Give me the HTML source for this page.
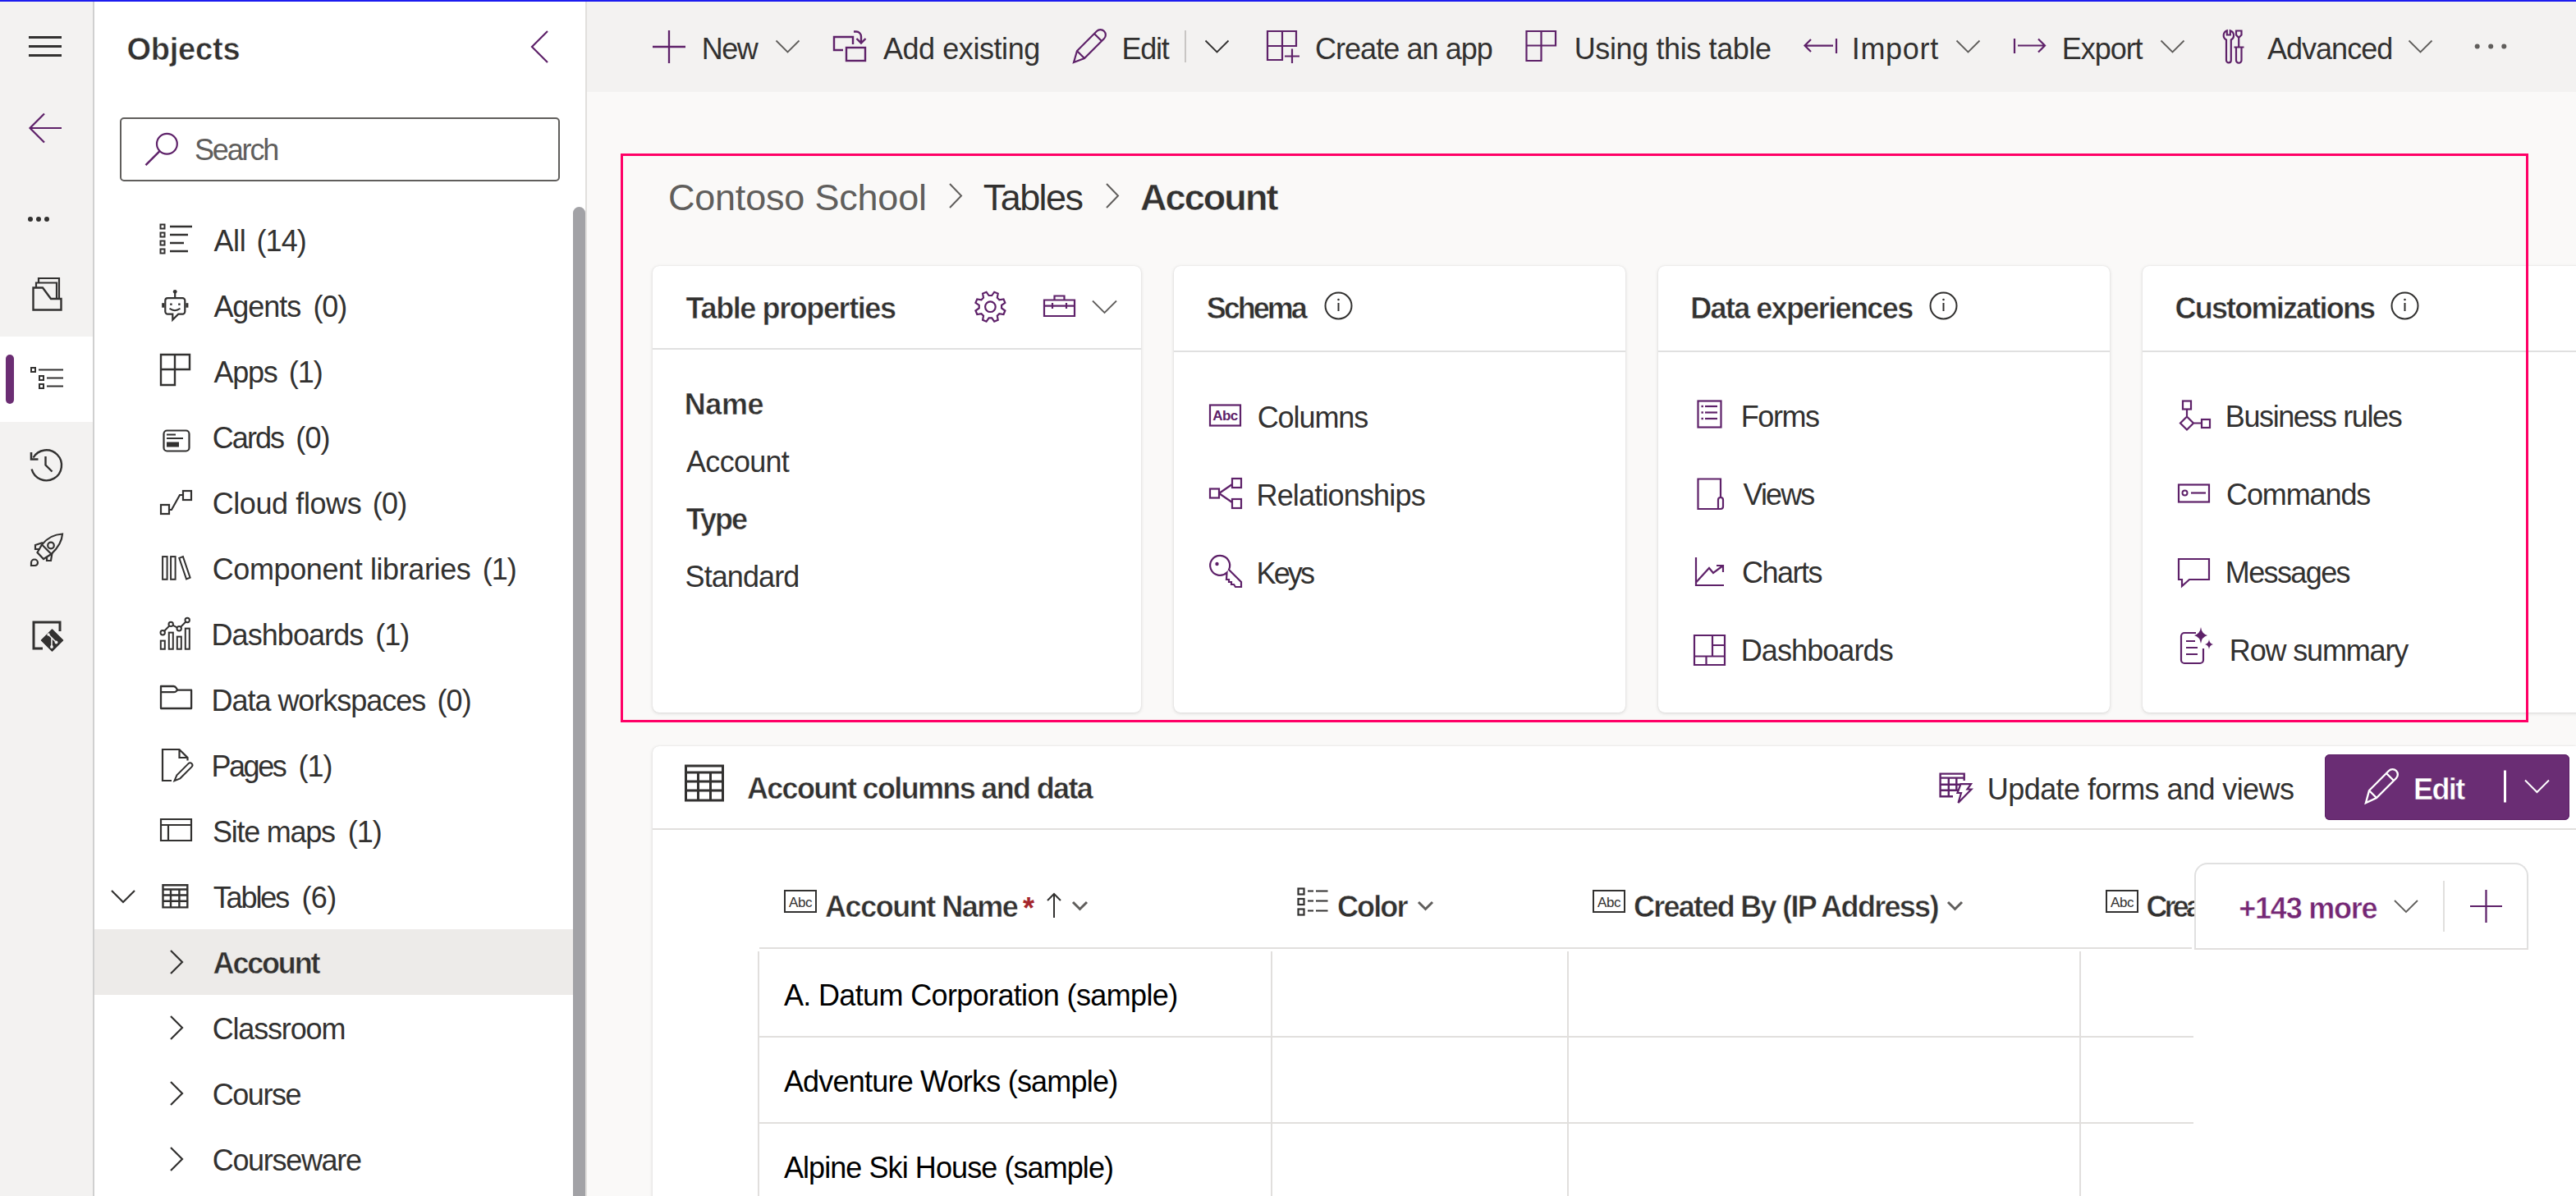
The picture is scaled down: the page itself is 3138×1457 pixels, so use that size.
<!DOCTYPE html><html><head><meta charset="utf-8"><style>html,body{margin:0;padding:0;width:3138px;height:1457px;overflow:hidden;position:relative;font-family:"Liberation Sans",sans-serif;}</style></head><body>
<div style="position:absolute;left:0px;top:0px;width:3138px;height:1457px;background:#faf9f8"></div>
<div style="position:absolute;left:0px;top:0px;width:113px;height:1457px;background:#f3f2f1"></div>
<div style="position:absolute;left:0px;top:410px;width:113px;height:104px;background:#ffffff"></div>
<div style="position:absolute;left:113px;top:0px;width:2px;height:1457px;background:#d0d0d0"></div>
<div style="position:absolute;left:115px;top:0px;width:598px;height:1457px;background:#ffffff"></div>
<div style="position:absolute;left:713px;top:0px;width:2px;height:1457px;background:#e1dfdd"></div>
<div style="position:absolute;left:715px;top:0px;width:2423px;height:112px;background:#f3f2f1"></div>
<div style="position:absolute;left:0px;top:0px;width:3138px;height:2px;background:#1c1cf0"></div>
<div style="position:absolute;left:7px;top:432px;width:10px;height:60px;background:#6b2d73;border-radius:5px"></div>
<div style="position:absolute;left:146px;top:143px;width:536px;height:78px;box-sizing:border-box;border:2px solid #605e5c;border-radius:5px;background:#fff"></div>
<div style="position:absolute;left:698px;top:252px;width:15px;height:1205px;background:#a2a2a6;border-radius:7.5px 7.5px 0 0"></div>
<div style="position:absolute;left:115px;top:1132px;width:583px;height:80px;background:#edebe9"></div>
<div style="position:absolute;left:795px;top:324px;width:595px;height:544px;background:#fff;border-radius:8px;box-shadow:0 1px 4px rgba(0,0,0,0.14),0 0 1px rgba(0,0,0,0.12)"></div>
<div style="position:absolute;left:795px;top:424px;width:595px;height:2px;background:#e0e0e0"></div>
<div style="position:absolute;left:1430px;top:324px;width:550px;height:544px;background:#fff;border-radius:8px;box-shadow:0 1px 4px rgba(0,0,0,0.14),0 0 1px rgba(0,0,0,0.12)"></div>
<div style="position:absolute;left:1430px;top:427px;width:550px;height:2px;background:#e0e0e0"></div>
<div style="position:absolute;left:2020px;top:324px;width:550px;height:544px;background:#fff;border-radius:8px;box-shadow:0 1px 4px rgba(0,0,0,0.14),0 0 1px rgba(0,0,0,0.12)"></div>
<div style="position:absolute;left:2020px;top:427px;width:550px;height:2px;background:#e0e0e0"></div>
<div style="position:absolute;left:2610px;top:324px;width:600px;height:544px;background:#fff;border-radius:8px;box-shadow:0 1px 4px rgba(0,0,0,0.14),0 0 1px rgba(0,0,0,0.12)"></div>
<div style="position:absolute;left:2610px;top:427px;width:600px;height:2px;background:#e0e0e0"></div>
<div style="position:absolute;left:795px;top:909px;width:2343px;height:600px;background:#fff;border-radius:8px 0 0 0;box-shadow:0 1px 4px rgba(0,0,0,0.14),0 0 1px rgba(0,0,0,0.12)"></div>
<div style="position:absolute;left:795px;top:1009px;width:2343px;height:2px;background:#e1dfdd"></div>
<div style="position:absolute;left:2832px;top:919px;width:298px;height:80px;background:#6a2d74;border-radius:6px;box-shadow:inset 0 0 0 1px #5c1f66"></div>
<div style="position:absolute;left:925px;top:1154px;width:1745px;height:2px;background:#e1dfdd"></div>
<div style="position:absolute;left:923px;top:1159px;width:2px;height:300px;background:#e1dfdd"></div>
<div style="position:absolute;left:1548px;top:1159px;width:2px;height:300px;background:#e1dfdd"></div>
<div style="position:absolute;left:1909px;top:1159px;width:2px;height:300px;background:#e1dfdd"></div>
<div style="position:absolute;left:2533px;top:1159px;width:2px;height:300px;background:#e1dfdd"></div>
<div style="position:absolute;left:925px;top:1262px;width:1747px;height:2px;background:#e1dfdd"></div>
<div style="position:absolute;left:925px;top:1367px;width:1747px;height:2px;background:#e1dfdd"></div>
<svg width="3138" height="1457" style="position:absolute;left:0;top:0"><path d="M35 45.5H75" stroke="#323130" stroke-width="3" fill="none" /><path d="M35 56.5H75" stroke="#323130" stroke-width="3" fill="none" /><path d="M35 67.5H75" stroke="#323130" stroke-width="3" fill="none" /><path d="M75 156H36 M54 138.5L36.5 156L54 173.5" stroke="#5e2169" stroke-width="2.2" fill="none" /><circle cx="37" cy="267" r="3" stroke="#323130" stroke-width="0" fill="#323130"/><circle cx="47" cy="267" r="3" stroke="#323130" stroke-width="0" fill="#323130"/><circle cx="57" cy="267" r="3" stroke="#323130" stroke-width="0" fill="#323130"/><path d="M40.5 377.5V350.5H52L62 364H74.5V377.5Z" stroke="#323130" stroke-width="2.4" fill="none" /><path d="M44 350.5V344.5H69V364" stroke="#323130" stroke-width="2.2" fill="none" /><path d="M47 344.5V339H72V364" stroke="#323130" stroke-width="2.2" fill="none" /><rect x="38" y="448" width="5" height="5" rx="0" stroke="#323130" stroke-width="2" fill="none"/><rect x="48" y="458" width="5" height="5" rx="0" stroke="#323130" stroke-width="2" fill="none"/><rect x="48" y="468" width="5" height="5" rx="0" stroke="#323130" stroke-width="2" fill="none"/><path d="M47 450.5H77 M57 460.5H77 M57 470.5H77" stroke="#323130" stroke-width="2.2" fill="none" /><path d="M40.5 557.5 A18.5 18.5 0 1 1 38.6 571.5" stroke="#323130" stroke-width="2.4" fill="none" /><path d="M38 551V559.5H46.5" stroke="#323130" stroke-width="2.6" fill="none" /><path d="M55.5 556V566.5L63.5 574.5" stroke="#323130" stroke-width="2.4" fill="none" /><path d="M51 663.5C57 656 66 651 76 650.5C75.5 660 71 667 62.5 675Z" stroke="#323130" stroke-width="2.2" fill="none" /><path d="M51 663.5L45.5 673L53 681L62.5 675" stroke="#323130" stroke-width="2.2" fill="none" /><path d="M52 661L43 664V669H48.5" stroke="#323130" stroke-width="2.2" fill="none" /><path d="M63.5 673.5L62 683H57V678" stroke="#323130" stroke-width="2.2" fill="none" /><circle cx="62" cy="664.5" r="3.8" stroke="#323130" stroke-width="2.2" fill="none"/><path d="M38 689V685.5A4 4 0 0 1 42 681.5A4 4 0 0 1 46 685.5A3.5 3.5 0 0 1 42.5 689Z" stroke="#323130" stroke-width="2.2" fill="none" /><path d="M52 790H41V758H73V769" stroke="#323130" stroke-width="3" fill="none" /><path d="M63.5 767 L76.5 780 L63.5 793 L50.5 780Z" stroke="#323130" stroke-width="1.5" fill="#323130" stroke-linejoin="round"/><path d="M59.5 773.5L63 777V788 M63 777L68.5 782.5" stroke="#f3f2f1" stroke-width="1.6" fill="none" /><circle cx="59" cy="773" r="1.7" stroke="#f3f2f1" stroke-width="0" fill="#f3f2f1"/><circle cx="63" cy="788" r="1.9" stroke="#f3f2f1" stroke-width="0" fill="#f3f2f1"/><circle cx="68.5" cy="782.5" r="1.9" stroke="#f3f2f1" stroke-width="0" fill="#f3f2f1"/><path d="M667 38L648 57L667 76" stroke="#5e2169" stroke-width="2.2" fill="none" /><circle cx="203.4" cy="175.3" r="12.4" stroke="#5e2169" stroke-width="2.2" fill="none"/><path d="M194.5 184.2L177.5 201.2" stroke="#5e2169" stroke-width="2.4" fill="none" /><path d="M208 1158L222 1172L208 1186" stroke="#323130" stroke-width="2.2" fill="none" /><path d="M208 1238L222 1252L208 1266" stroke="#323130" stroke-width="2.2" fill="none" /><path d="M208 1318L222 1332L208 1346" stroke="#323130" stroke-width="2.2" fill="none" /><path d="M208 1398L222 1412L208 1426" stroke="#323130" stroke-width="2.2" fill="none" /><path d="M136 1085L150 1099L164 1085" stroke="#323130" stroke-width="2.2" fill="none" /><rect x="195.5" y="273.5" width="5" height="5" rx="0" stroke="#323130" stroke-width="2" fill="none"/><rect x="195.5" y="283.5" width="5" height="5" rx="0" stroke="#323130" stroke-width="2" fill="none"/><rect x="195.5" y="293.5" width="5" height="5" rx="0" stroke="#323130" stroke-width="2" fill="none"/><rect x="195.5" y="303.5" width="5" height="5" rx="0" stroke="#323130" stroke-width="2" fill="none"/><path d="M207 276H234 M207 286H229 M207 296H224 M207 306H229" stroke="#323130" stroke-width="2.4" fill="none" /><path d="M213.2 355V363" stroke="#323130" stroke-width="2.2" fill="none" /><circle cx="213.2" cy="355.3" r="2.4" stroke="#323130" stroke-width="0" fill="#323130"/><path d="M204.3 363.2H222.3A3 3 0 0 1 225.3 366.2V379.6A3 3 0 0 1 222.3 382.6H217.2L210.3 389.5V382.6H204.3A3 3 0 0 1 201.3 379.6V366.2A3 3 0 0 1 204.3 363.2Z" stroke="#323130" stroke-width="2.2" fill="none" /><rect x="197.2" y="369.2" width="3" height="5.5" fill="#323130"/><rect x="226.4" y="369.2" width="3" height="5.5" fill="#323130"/><rect x="207.2" y="369.5" width="2.4" height="2.4" fill="#323130"/><rect x="217.2" y="369.5" width="2.4" height="2.4" fill="#323130"/><path d="M206.5 375.8Q213 380.5 219.5 375.8" stroke="#323130" stroke-width="2" fill="none" /><path d="M196 432H231V450H196Z M213 432V469H196V450" stroke="#323130" stroke-width="2.4" fill="none" /><rect x="199.5" y="524.5" width="31" height="25" rx="4" stroke="#323130" stroke-width="2.2" fill="none"/><path d="M203 529.5H214 M203 534H223" stroke="#323130" stroke-width="2" fill="none" /><rect x="203" y="538.5" width="15" height="6" fill="#323130"/><rect x="196" y="615" width="10" height="11" rx="0" stroke="#323130" stroke-width="2.2" fill="none"/><rect x="223" y="598" width="10" height="11" rx="0" stroke="#323130" stroke-width="2.2" fill="none"/><path d="M206 621H209L219 603H223" stroke="#323130" stroke-width="2.2" fill="none" /><rect x="198.1" y="678.1" width="5.5" height="27.7" rx="0" stroke="#323130" stroke-width="2" fill="none"/><rect x="208.1" y="678.1" width="5.5" height="27.7" rx="0" stroke="#323130" stroke-width="2" fill="none"/><path d="M218.3 679.9L222.9 678.1L231.6 703.6L227 705.4Z" stroke="#323130" stroke-width="2" fill="none" /><rect x="195.8" y="780.6" width="5" height="10.1" rx="0" stroke="#323130" stroke-width="2" fill="none"/><rect x="205.8" y="770.6" width="5" height="20.1" rx="0" stroke="#323130" stroke-width="2" fill="none"/><rect x="215.8" y="775.6" width="5" height="15.1" rx="0" stroke="#323130" stroke-width="2" fill="none"/><rect x="225.8" y="765.6" width="5" height="25.1" rx="0" stroke="#323130" stroke-width="2" fill="none"/><path d="M198.2 770.7L208.2 760.4L218.2 765.8L228.2 755.5" stroke="#323130" stroke-width="2" fill="none" /><circle cx="198.2" cy="770.7" r="2.7" stroke="#323130" stroke-width="2" fill="#fff"/><circle cx="208.2" cy="760.4" r="2.7" stroke="#323130" stroke-width="2" fill="#fff"/><circle cx="218.2" cy="765.8" r="2.7" stroke="#323130" stroke-width="2" fill="#fff"/><circle cx="228.2" cy="755.5" r="2.7" stroke="#323130" stroke-width="2" fill="#fff"/><path d="M196 836H211.5Q213.5 836 214.8 838.3L216.2 840.7H233.1V863H196Z M196 843.2H211.5Q213.5 843.2 214.8 842L216.2 840.7" stroke="#323130" stroke-width="2.3" fill="none" stroke-linejoin="round"/><path d="M209 951H198V913H218.5L228.5 923V926.5 M218.5 913V923H228.5" stroke="#323130" stroke-width="2.2" fill="none" /><path d="M212.5 951.2L215.4 944.3L229.6 930.1A2.83 2.83 0 0 1 233.6 934.1L219.4 948.3Z" stroke="#323130" stroke-width="2" fill="none" /><path d="M196 998H233V1024H196Z M196 1005H233 M205 1005V1024" stroke="#323130" stroke-width="2.2" fill="none" /><path d="M198.5 1078.3H228.3V1105.4H198.5Z M198.5 1083.5H228.3 M198.5 1090.5H228.3 M198.5 1097.7H228.3 M208 1083.5V1105.4 M218.4 1083.5V1105.4" stroke="#323130" stroke-width="2.4" fill="none" /><path d="M795 57H835 M815 37V77" stroke="#5e2169" stroke-width="2.3" fill="none" /><path d="M945.5 49.5L959.5 63.5L973.5 49.5" stroke="#605e5c" stroke-width="1.8" fill="none" /><path d="M1027 61H1016V45H1039V54" stroke="#5e2169" stroke-width="2.4" fill="none" /><rect x="1031" y="58" width="23" height="16" rx="0" stroke="#5e2169" stroke-width="2.4" fill="none"/><path d="M1040 38.5H1043A6 6 0 0 1 1049 44.5V52.5 M1043.5 47L1049 52.5L1054.5 47" stroke="#5e2169" stroke-width="2.4" fill="none" /><path d="M1308 76L1312 62L1336 38A6 6 0 0 1 1345 47L1321 71Z M1312 62L1321 71 M1333 41L1342 50" stroke="#5e2169" stroke-width="2.2" fill="none" /><rect x="1443" y="37" width="2" height="39" fill="#c8c6c4"/><path d="M1468.5 49.5L1482.5 63.5L1496.5 49.5" stroke="#323130" stroke-width="1.8" fill="none" /><path d="M1544 38H1579V56H1544Z M1562 38V73H1544V38 M1544 56H1562" stroke="#5e2169" stroke-width="2.2" fill="none" /><path d="M1565 68.5H1583 M1574 59.5V77" stroke="#5e2169" stroke-width="2.2" fill="none" /><path d="M1859.5 38H1895V55.5H1859.5Z M1877.5 38V74H1859.5V38" stroke="#5e2169" stroke-width="2.2" fill="none" /><path d="M2199 55.6H2233 M2237 47V65 M2206 48L2198.5 55.6L2206 63" stroke="#5e2169" stroke-width="2.2" fill="none" /><path d="M2383.5 49.5L2397.5 63.5L2411.5 49.5" stroke="#605e5c" stroke-width="1.8" fill="none" /><path d="M2454 47V65 M2458 55.5H2491 M2483 47.5L2491 55.5L2483 63.5" stroke="#5e2169" stroke-width="2.2" fill="none" /><path d="M2632.5 49.5L2646.5 63.5L2660.5 49.5" stroke="#605e5c" stroke-width="1.8" fill="none" /><path d="M2712 48.5A6.2 6.2 0 0 1 2712.8 37.2V42.5H2716.8V37.2A6.2 6.2 0 0 1 2717.8 48.5V73.5A2.9 2.9 0 0 1 2712 73.5Z" stroke="#5e2169" stroke-width="2.2" fill="none" /><path d="M2724 37.5H2730.5V42.5L2727.2 46L2724 42.5Z M2727.2 46V57.5 M2721.5 57.5H2733.5 M2724 57.5V73.5A3.25 3.25 0 0 0 2730.5 73.5V57.5" stroke="#5e2169" stroke-width="2.2" fill="none" /><path d="M2934.5 49.5L2948.5 63.5L2962.5 49.5" stroke="#605e5c" stroke-width="1.8" fill="none" /><circle cx="3017.7" cy="56.5" r="3" stroke="#605e5c" stroke-width="0" fill="#605e5c"/><circle cx="3034.2" cy="56.5" r="3" stroke="#605e5c" stroke-width="0" fill="#605e5c"/><circle cx="3050.3" cy="56.5" r="3" stroke="#605e5c" stroke-width="0" fill="#605e5c"/><path d="M1157 224L1171 238.5L1157 253" stroke="#605e5c" stroke-width="2" fill="none" /><path d="M1348 224L1362 238.5L1348 253" stroke="#605e5c" stroke-width="2" fill="none" /><circle cx="1630.5" cy="372.5" r="16" stroke="#323130" stroke-width="2" fill="none"/><rect x="1629.5" y="369" width="2" height="10" fill="#323130"/><circle cx="1630.5" cy="365" r="1.3" stroke="#323130" stroke-width="0" fill="#323130"/><circle cx="2367.5" cy="372.5" r="16" stroke="#323130" stroke-width="2" fill="none"/><rect x="2366.5" y="369" width="2" height="10" fill="#323130"/><circle cx="2367.5" cy="365" r="1.3" stroke="#323130" stroke-width="0" fill="#323130"/><circle cx="2929.5" cy="372.5" r="16" stroke="#323130" stroke-width="2" fill="none"/><rect x="2928.5" y="369" width="2" height="10" fill="#323130"/><circle cx="2929.5" cy="365" r="1.3" stroke="#323130" stroke-width="0" fill="#323130"/><path d="M1224.37 378.51L1222.51 383.00L1217.35 382.10L1214.80 384.65L1215.70 389.81L1211.21 391.67L1208.20 387.38L1204.60 387.38L1201.59 391.67L1197.10 389.81L1198.00 384.65L1195.45 382.10L1190.29 383.00L1188.43 378.51L1192.72 375.50L1192.72 371.90L1188.43 368.89L1190.29 364.40L1195.45 365.30L1198.00 362.75L1197.10 357.59L1201.59 355.73L1204.60 360.02L1208.20 360.02L1211.21 355.73L1215.70 357.59L1214.80 362.75L1217.35 365.30L1222.51 364.40L1224.37 368.89L1220.08 371.90L1220.08 375.50Z" stroke="#5e2169" stroke-width="2.2" fill="none" /><circle cx="1206.4" cy="373.7" r="6.3" stroke="#5e2169" stroke-width="2.2" fill="none"/><path d="M1272 365.5H1309V385H1272Z M1284.5 365.5V360.5H1296.5V365.5 M1272 372.6H1309 M1282 369V376 M1299 369V376" stroke="#5e2169" stroke-width="2.2" fill="none" /><path d="M1331 366.5L1345.5 381L1360 366.5" stroke="#605e5c" stroke-width="1.8" fill="none" /><rect x="1474" y="493.5" width="37" height="25" rx="0" stroke="#5e2169" stroke-width="2.2" fill="none"/><text x="1492.5" y="512" font-family="Liberation Sans" font-size="17" font-weight="700" fill="#5e2169" text-anchor="middle" letter-spacing="-0.6">Abc</text><rect x="1474" y="595.5" width="11" height="11" rx="0" stroke="#5e2169" stroke-width="2.2" fill="none"/><rect x="1501" y="583" width="11" height="11" rx="0" stroke="#5e2169" stroke-width="2.2" fill="none"/><rect x="1501" y="608" width="11" height="11" rx="0" stroke="#5e2169" stroke-width="2.2" fill="none"/><path d="M1485 601L1501 590 M1485 601L1501 612" stroke="#5e2169" stroke-width="2.2" fill="none" /><path d="M1494.5 697.5A12 12 0 1 1 1497 694L1512 709V715H1505L1503 712L1500 712V709L1497 709V706L1494 706Z" stroke="#5e2169" stroke-width="2.2" fill="none" /><circle cx="1482.5" cy="687" r="2.2" stroke="#5e2169" stroke-width="0" fill="#5e2169"/><rect x="2068.5" y="488.5" width="28" height="32" rx="0" stroke="#5e2169" stroke-width="2.2" fill="none"/><rect x="2072.5" y="493.8" width="2.4" height="2.4" fill="#5e2169"/><path d="M2077 495H2092" stroke="#5e2169" stroke-width="2.2" fill="none" /><rect x="2072.5" y="501.3" width="2.4" height="2.4" fill="#5e2169"/><path d="M2077 502.5H2092" stroke="#5e2169" stroke-width="2.2" fill="none" /><rect x="2072.5" y="508.8" width="2.4" height="2.4" fill="#5e2169"/><path d="M2077 510H2092" stroke="#5e2169" stroke-width="2.2" fill="none" /><path d="M2096 606V583.5H2068.5V620H2093" stroke="#5e2169" stroke-width="2.2" fill="none" /><path d="M2093 620V609A3 3 0 0 1 2099 609V617A3 3 0 0 1 2096 620H2093" stroke="#5e2169" stroke-width="2.2" fill="none" /><path d="M2066 679V713H2100" stroke="#5e2169" stroke-width="2.2" fill="none" /><path d="M2066.5 709L2082 692L2087 698L2099 689 M2091 689H2099V697" stroke="#5e2169" stroke-width="2.2" fill="none" /><path d="M2064 774H2101V810H2064Z M2086 774V799 M2086 786H2101 M2064 799.5H2101 M2078.5 799.5V810" stroke="#5e2169" stroke-width="2.2" fill="none" /><rect x="2659" y="488.5" width="10" height="10" rx="0" stroke="#5e2169" stroke-width="2.2" fill="none"/><rect x="2682" y="511" width="10" height="10" rx="0" stroke="#5e2169" stroke-width="2.2" fill="none"/><path d="M2664 498.5V508 M2664 507.5L2672 515.5L2664 523.5L2656 515.5Z M2672 515.5H2682" stroke="#5e2169" stroke-width="2.2" fill="none" /><rect x="2654" y="590.5" width="37" height="21" rx="0" stroke="#5e2169" stroke-width="2.2" fill="none"/><circle cx="2661.5" cy="600.5" r="3" stroke="#5e2169" stroke-width="2" fill="none"/><path d="M2669 600.5H2687" stroke="#5e2169" stroke-width="2.2" fill="none" /><path d="M2654 681H2691V706H2667L2658 714V706H2654Z" stroke="#5e2169" stroke-width="2.2" fill="none" /><path d="M2675 771H2661A4 4 0 0 0 2657 775V804A4 4 0 0 0 2661 808H2680A4 4 0 0 0 2684 804V790" stroke="#5e2169" stroke-width="2.2" fill="none" /><path d="M2663 781H2674 M2663 789H2677 M2663 797H2677" stroke="#5e2169" stroke-width="2.2" fill="none" /><path d="M2681 764Q2682 772 2689 774Q2682 776 2681 784Q2680 776 2673 774Q2680 772 2681 764Z" stroke="#5e2169" stroke-width="0" fill="#5e2169" /><path d="M2691 779Q2691.5 784 2696 785Q2691.5 786 2691 791Q2690.5 786 2686 785Q2690.5 784 2691 779Z" stroke="#5e2169" stroke-width="0" fill="#5e2169" /><path d="M835.5 933H880.5V975H835.5Z M835.5 941H880.5 M835.5 952H880.5 M835.5 963H880.5 M850.5 941V975 M865.5 941V975" stroke="#323130" stroke-width="3" fill="none" /><path d="M2392.7 951V942.6H2363.6V970.3H2379 M2363.6 947.6H2392.7 M2363.6 955.8H2388 M2363.6 962.8H2385 M2373.8 947.6V970.3 M2383.3 947.6V962.8" stroke="#5e2169" stroke-width="2.4" fill="none" /><path d="M2388.5 955.2H2401L2396.5 961.5H2401.5L2385.5 978L2389 966H2384.5Z" stroke="#5e2169" stroke-width="2.2" fill="none" /><path d="M2882 978L2886 963L2910 939A6 6 0 0 1 2919 948L2895 972Z M2886 963L2895 972 M2907 942L2916 951" stroke="#fff" stroke-width="2.4" fill="none" /><rect x="3050" y="938.5" width="3" height="39" fill="#fff"/><path d="M3076 950.5L3090.5 965L3105 950.5" stroke="#fff" stroke-width="2" fill="none" /><rect x="956" y="1085" width="38" height="26" rx="0" stroke="#323130" stroke-width="2" fill="none"/><text x="975" y="1105" font-family="Liberation Sans" font-size="17" fill="#323130" text-anchor="middle" letter-spacing="-0.5">Abc</text><rect x="1941" y="1085" width="38" height="26" rx="0" stroke="#323130" stroke-width="2" fill="none"/><text x="1960" y="1105" font-family="Liberation Sans" font-size="17" fill="#323130" text-anchor="middle" letter-spacing="-0.5">Abc</text><rect x="2566" y="1085" width="38" height="26" rx="0" stroke="#323130" stroke-width="2" fill="none"/><text x="2585" y="1105" font-family="Liberation Sans" font-size="17" fill="#323130" text-anchor="middle" letter-spacing="-0.5">Abc</text><path d="M1284 1089V1118 M1276 1097L1284 1089L1292 1097" stroke="#323130" stroke-width="2" fill="none" /><path d="M1307 1099L1315.5 1107.5L1324 1099" stroke="#605e5c" stroke-width="3" fill="none" /><rect x="1581.5" y="1082.5" width="7" height="7" rx="0" stroke="#323130" stroke-width="2.2" fill="none"/><rect x="1581.5" y="1095" width="7" height="7" rx="0" stroke="#323130" stroke-width="2.2" fill="none"/><rect x="1581.5" y="1107.5" width="7" height="7" rx="0" stroke="#323130" stroke-width="2.2" fill="none"/><path d="M1593 1085.5H1600 M1603 1085.5H1617.5 M1593 1097.5H1600 M1603 1097.5H1617.5 M1593 1109.5H1600 M1603 1109.5H1617.5" stroke="#323130" stroke-width="2.2" fill="none" /><path d="M1728 1099L1736.5 1107.5L1745 1099" stroke="#605e5c" stroke-width="3" fill="none" /><path d="M2373 1099L2381.5 1107.5L2390 1099" stroke="#605e5c" stroke-width="3" fill="none" /></svg>
<span style="position:absolute;left:154.4px;top:40.8px;font-size:38px;line-height:38px;font-weight:700;color:#323130;letter-spacing:-0.21px;white-space:pre;-webkit-text-stroke:0.5px #fff;">Objects</span>
<span style="position:absolute;left:236.9px;top:165.1px;font-size:36px;line-height:36px;font-weight:400;color:#605e5c;letter-spacing:-2.12px;white-space:pre;">Search</span>
<span style="position:absolute;left:260.4px;top:275.5px;font-size:36px;line-height:36px;font-weight:400;color:#323130;letter-spacing:-0.37px;white-space:pre;">All</span>
<span style="position:absolute;left:312.5px;top:275.5px;font-size:36px;line-height:36px;font-weight:400;color:#323130;letter-spacing:-0.92px;white-space:pre;">(14)</span>
<span style="position:absolute;left:260.4px;top:355.5px;font-size:36px;line-height:36px;font-weight:400;color:#323130;letter-spacing:-1.06px;white-space:pre;">Agents</span>
<span style="position:absolute;left:381.4px;top:355.5px;font-size:36px;line-height:36px;font-weight:400;color:#323130;letter-spacing:-1.07px;white-space:pre;">(0)</span>
<span style="position:absolute;left:260.4px;top:435.5px;font-size:36px;line-height:36px;font-weight:400;color:#323130;letter-spacing:-1.26px;white-space:pre;">Apps</span>
<span style="position:absolute;left:351.8px;top:435.5px;font-size:36px;line-height:36px;font-weight:400;color:#323130;letter-spacing:-0.97px;white-space:pre;">(1)</span>
<span style="position:absolute;left:258.7px;top:515.5px;font-size:36px;line-height:36px;font-weight:400;color:#323130;letter-spacing:-1.90px;white-space:pre;">Cards</span>
<span style="position:absolute;left:360.3px;top:515.5px;font-size:36px;line-height:36px;font-weight:400;color:#323130;letter-spacing:-0.87px;white-space:pre;">(0)</span>
<span style="position:absolute;left:258.7px;top:595.5px;font-size:36px;line-height:36px;font-weight:400;color:#323130;letter-spacing:-0.41px;white-space:pre;">Cloud flows</span>
<span style="position:absolute;left:453.8px;top:595.5px;font-size:36px;line-height:36px;font-weight:400;color:#323130;letter-spacing:-0.77px;white-space:pre;">(0)</span>
<span style="position:absolute;left:258.7px;top:675.5px;font-size:36px;line-height:36px;font-weight:400;color:#323130;letter-spacing:-0.39px;white-space:pre;">Component libraries</span>
<span style="position:absolute;left:587.8px;top:675.5px;font-size:36px;line-height:36px;font-weight:400;color:#323130;letter-spacing:-1.07px;white-space:pre;">(1)</span>
<span style="position:absolute;left:257.5px;top:755.5px;font-size:36px;line-height:36px;font-weight:400;color:#323130;letter-spacing:-0.93px;white-space:pre;">Dashboards</span>
<span style="position:absolute;left:457.3px;top:755.5px;font-size:36px;line-height:36px;font-weight:400;color:#323130;letter-spacing:-1.02px;white-space:pre;">(1)</span>
<span style="position:absolute;left:257.5px;top:835.5px;font-size:36px;line-height:36px;font-weight:400;color:#323130;letter-spacing:-1.03px;white-space:pre;">Data workspaces</span>
<span style="position:absolute;left:532.5px;top:835.5px;font-size:36px;line-height:36px;font-weight:400;color:#323130;letter-spacing:-0.87px;white-space:pre;">(0)</span>
<span style="position:absolute;left:257.5px;top:915.5px;font-size:36px;line-height:36px;font-weight:400;color:#323130;letter-spacing:-2.46px;white-space:pre;">Pages</span>
<span style="position:absolute;left:363.6px;top:915.5px;font-size:36px;line-height:36px;font-weight:400;color:#323130;letter-spacing:-1.02px;white-space:pre;">(1)</span>
<span style="position:absolute;left:258.9px;top:995.5px;font-size:36px;line-height:36px;font-weight:400;color:#323130;letter-spacing:-1.24px;white-space:pre;">Site maps</span>
<span style="position:absolute;left:423.8px;top:995.5px;font-size:36px;line-height:36px;font-weight:400;color:#323130;letter-spacing:-1.02px;white-space:pre;">(1)</span>
<span style="position:absolute;left:259.7px;top:1075.5px;font-size:36px;line-height:36px;font-weight:400;color:#323130;letter-spacing:-2.09px;white-space:pre;">Tables</span>
<span style="position:absolute;left:367.5px;top:1075.5px;font-size:36px;line-height:36px;font-weight:400;color:#323130;letter-spacing:-0.62px;white-space:pre;">(6)</span>
<span style="position:absolute;left:259.6px;top:1155.5px;font-size:36px;line-height:36px;font-weight:700;color:#323130;letter-spacing:-2.19px;white-space:pre;-webkit-text-stroke:0.5px #edebe9;">Account</span>
<span style="position:absolute;left:258.7px;top:1235.5px;font-size:36px;line-height:36px;font-weight:400;color:#323130;letter-spacing:-1.17px;white-space:pre;">Classroom</span>
<span style="position:absolute;left:258.7px;top:1315.5px;font-size:36px;line-height:36px;font-weight:400;color:#323130;letter-spacing:-1.43px;white-space:pre;">Course</span>
<span style="position:absolute;left:258.7px;top:1395.5px;font-size:36px;line-height:36px;font-weight:400;color:#323130;letter-spacing:-1.31px;white-space:pre;">Courseware</span>
<span style="position:absolute;left:854.8px;top:41.8px;font-size:36px;line-height:36px;font-weight:400;color:#323130;letter-spacing:-1.48px;white-space:pre;">New</span>
<span style="position:absolute;left:1075.9px;top:41.8px;font-size:36px;line-height:36px;font-weight:400;color:#323130;letter-spacing:-0.43px;white-space:pre;">Add existing</span>
<span style="position:absolute;left:1366.6px;top:41.8px;font-size:36px;line-height:36px;font-weight:400;color:#323130;letter-spacing:-1.28px;white-space:pre;">Edit</span>
<span style="position:absolute;left:1601.9px;top:41.8px;font-size:36px;line-height:36px;font-weight:400;color:#323130;letter-spacing:-0.93px;white-space:pre;">Create an app</span>
<span style="position:absolute;left:1917.7px;top:41.8px;font-size:36px;line-height:36px;font-weight:400;color:#323130;letter-spacing:-0.38px;white-space:pre;">Using this table</span>
<span style="position:absolute;left:2255.7px;top:41.8px;font-size:36px;line-height:36px;font-weight:400;color:#323130;letter-spacing:0.71px;white-space:pre;">Import</span>
<span style="position:absolute;left:2511.8px;top:41.8px;font-size:36px;line-height:36px;font-weight:400;color:#323130;letter-spacing:-1.05px;white-space:pre;">Export</span>
<span style="position:absolute;left:2761.9px;top:41.8px;font-size:36px;line-height:36px;font-weight:400;color:#323130;letter-spacing:-0.96px;white-space:pre;">Advanced</span>
<span style="position:absolute;left:813.9px;top:218.1px;font-size:45px;line-height:45px;font-weight:400;color:#605e5c;letter-spacing:-0.20px;white-space:pre;">Contoso School</span>
<span style="position:absolute;left:1197.8px;top:218.1px;font-size:45px;line-height:45px;font-weight:400;color:#323130;letter-spacing:-1.59px;white-space:pre;">Tables</span>
<span style="position:absolute;left:1388.9px;top:218.1px;font-size:45px;line-height:45px;font-weight:700;color:#323130;letter-spacing:-1.89px;white-space:pre;-webkit-text-stroke:0.5px #faf9f8;">Account</span>
<span style="position:absolute;left:835.6px;top:358.0px;font-size:36px;line-height:36px;font-weight:700;color:#323130;letter-spacing:-1.40px;white-space:pre;-webkit-text-stroke:0.5px #fff;">Table properties</span>
<span style="position:absolute;left:1469.8px;top:358.0px;font-size:36px;line-height:36px;font-weight:700;color:#323130;letter-spacing:-3.01px;white-space:pre;-webkit-text-stroke:0.5px #fff;">Schema</span>
<span style="position:absolute;left:2059.2px;top:358.0px;font-size:36px;line-height:36px;font-weight:700;color:#323130;letter-spacing:-1.61px;white-space:pre;-webkit-text-stroke:0.5px #fff;">Data experiences</span>
<span style="position:absolute;left:2649.5px;top:358.0px;font-size:36px;line-height:36px;font-weight:700;color:#323130;letter-spacing:-1.80px;white-space:pre;-webkit-text-stroke:0.5px #fff;">Customizations</span>
<span style="position:absolute;left:833.8px;top:475.0px;font-size:36px;line-height:36px;font-weight:700;color:#323130;letter-spacing:-0.44px;white-space:pre;-webkit-text-stroke:0.5px #fff;">Name</span>
<span style="position:absolute;left:836.1px;top:544.9px;font-size:36px;line-height:36px;font-weight:400;color:#323130;letter-spacing:-0.74px;white-space:pre;">Account</span>
<span style="position:absolute;left:835.8px;top:615.1px;font-size:36px;line-height:36px;font-weight:700;color:#323130;letter-spacing:-2.07px;white-space:pre;-webkit-text-stroke:0.5px #fff;">Type</span>
<span style="position:absolute;left:834.6px;top:685.4px;font-size:36px;line-height:36px;font-weight:400;color:#323130;letter-spacing:-0.92px;white-space:pre;">Standard</span>
<span style="position:absolute;left:1531.7px;top:490.5px;font-size:36px;line-height:36px;font-weight:400;color:#323130;letter-spacing:-1.07px;white-space:pre;">Columns</span>
<span style="position:absolute;left:1530.5px;top:585.5px;font-size:36px;line-height:36px;font-weight:400;color:#323130;letter-spacing:-0.83px;white-space:pre;">Relationships</span>
<span style="position:absolute;left:1530.5px;top:680.5px;font-size:36px;line-height:36px;font-weight:400;color:#323130;letter-spacing:-2.83px;white-space:pre;">Keys</span>
<span style="position:absolute;left:2120.7px;top:490.3px;font-size:36px;line-height:36px;font-weight:400;color:#323130;letter-spacing:-1.41px;white-space:pre;">Forms</span>
<span style="position:absolute;left:2123.5px;top:585.3px;font-size:36px;line-height:36px;font-weight:400;color:#323130;letter-spacing:-1.91px;white-space:pre;">Views</span>
<span style="position:absolute;left:2121.9px;top:680.3px;font-size:36px;line-height:36px;font-weight:400;color:#323130;letter-spacing:-1.48px;white-space:pre;">Charts</span>
<span style="position:absolute;left:2120.7px;top:775.3px;font-size:36px;line-height:36px;font-weight:400;color:#323130;letter-spacing:-0.90px;white-space:pre;">Dashboards</span>
<span style="position:absolute;left:2710.8px;top:490.3px;font-size:36px;line-height:36px;font-weight:400;color:#323130;letter-spacing:-1.40px;white-space:pre;">Business rules</span>
<span style="position:absolute;left:2712.0px;top:585.3px;font-size:36px;line-height:36px;font-weight:400;color:#323130;letter-spacing:-1.10px;white-space:pre;">Commands</span>
<span style="position:absolute;left:2710.8px;top:680.3px;font-size:36px;line-height:36px;font-weight:400;color:#323130;letter-spacing:-1.62px;white-space:pre;">Messages</span>
<span style="position:absolute;left:2715.8px;top:775.3px;font-size:36px;line-height:36px;font-weight:400;color:#323130;letter-spacing:-1.16px;white-space:pre;">Row summary</span>
<span style="position:absolute;left:909.9px;top:943.2px;font-size:36px;line-height:36px;font-weight:700;color:#323130;letter-spacing:-1.66px;white-space:pre;-webkit-text-stroke:0.5px #fff;">Account columns and data</span>
<span style="position:absolute;left:2420.8px;top:943.8px;font-size:36px;line-height:36px;font-weight:400;color:#323130;letter-spacing:-0.57px;white-space:pre;">Update forms and views</span>
<span style="position:absolute;left:2940.1px;top:943.8px;font-size:36px;line-height:36px;font-weight:700;color:#fff;letter-spacing:-1.65px;white-space:pre;-webkit-text-stroke:0.5px #6a2d74;">Edit</span>
<span style="position:absolute;left:1005.1px;top:1086.5px;font-size:36px;line-height:36px;font-weight:700;color:#323130;letter-spacing:-1.49px;white-space:pre;-webkit-text-stroke:0.5px #fff;">Account Name</span>
<span style="position:absolute;left:1245.9px;top:1088.5px;font-size:36px;line-height:36px;font-weight:700;color:#a4262c;letter-spacing:0.00px;white-space:pre;">*</span>
<span style="position:absolute;left:1628.9px;top:1086.5px;font-size:36px;line-height:36px;font-weight:700;color:#323130;letter-spacing:-1.84px;white-space:pre;-webkit-text-stroke:0.5px #fff;">Color</span>
<span style="position:absolute;left:1989.9px;top:1086.5px;font-size:36px;line-height:36px;font-weight:700;color:#323130;letter-spacing:-1.71px;white-space:pre;-webkit-text-stroke:0.5px #fff;">Created By (IP Address)</span>
<span style="position:absolute;left:2614.5px;top:1086.5px;font-size:36px;line-height:36px;font-weight:700;color:#323130;letter-spacing:-3.94px;white-space:pre;-webkit-text-stroke:0.5px #fff;">Crea</span>
<span style="position:absolute;left:954.9px;top:1194.8px;font-size:36px;line-height:36px;font-weight:400;color:#000000;letter-spacing:-0.64px;white-space:pre;">A. Datum Corporation (sample)</span>
<span style="position:absolute;left:954.9px;top:1299.8px;font-size:36px;line-height:36px;font-weight:400;color:#000000;letter-spacing:-0.79px;white-space:pre;">Adventure Works (sample)</span>
<span style="position:absolute;left:954.9px;top:1404.8px;font-size:36px;line-height:36px;font-weight:400;color:#000000;letter-spacing:-0.92px;white-space:pre;">Alpine Ski House (sample)</span>
<div style="position:absolute;left:756px;top:187px;width:2324px;height:693px;box-sizing:border-box;border:3px solid #ff0066"></div>
<div style="position:absolute;left:2673px;top:1051px;width:407px;height:106px;box-sizing:border-box;background:#fff;border:2px solid #e0e0e0;border-bottom:none;border-radius:16px 16px 0 0"></div>
<div style="position:absolute;left:2673px;top:1155px;width:407px;height:2px;background:#e1dfdd"></div>
<svg width="3138" height="1457" style="position:absolute;left:0;top:0"><path d="M2917 1097L2931 1111L2945 1097" stroke="#605e5c" stroke-width="1.8" fill="none" /><rect x="2976" y="1073" width="2" height="62" fill="#e1dfdd"/><path d="M3009 1104H3048 M3028.5 1084V1124" stroke="#5e2169" stroke-width="2.2" fill="none" /></svg>
<span style="position:absolute;left:2727.3px;top:1088.5px;font-size:36px;line-height:36px;font-weight:700;color:#742774;letter-spacing:-1.24px;white-space:pre;-webkit-text-stroke:0.5px #fff;">+143 more</span>
</body></html>
